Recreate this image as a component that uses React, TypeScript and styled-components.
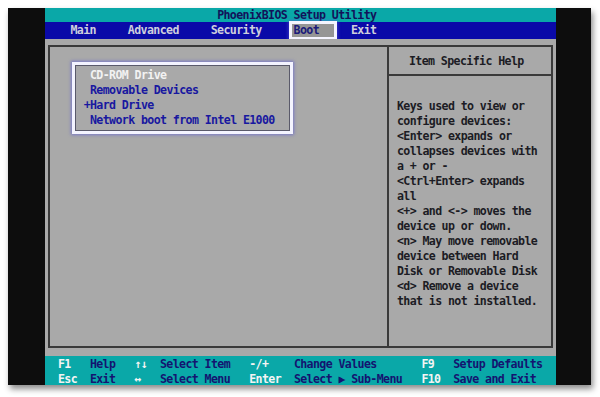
import styled, { createGlobalStyle } from 'styled-components';

// one text column of the 80x25 BIOS screen
const COL = 6.375;

const GlobalStyle = createGlobalStyle`
  html, body {
    margin: 0;
    padding: 0;
    background: #ffffff;
  }
  * {
    box-sizing: border-box;
  }
`;

const menuItems = ['Main', 'Advanced', 'Security', 'Boot', 'Exit'];

const bootOrder = [
    { label: 'CD-ROM Drive', selected: true },
    { label: 'Removable Devices' },
    { label: 'Hard Drive', expandable: true },
    { label: 'Network boot from Intel E1000' },
];

const helpLines = [
    'Keys used to view or',
    'configure devices:',
    '<Enter> expands or',
    'collapses devices with',
    'a + or -',
    '<Ctrl+Enter> expands',
    'all',
    '<+> and <-> moves the',
    'device up or down.',
    '<n> May move removable',
    'device between Hard',
    'Disk or Removable Disk',
    '<d> Remove a device',
    'that is not installed.',
];

const footerRows = [
    ['F1', 'Help', '↑↓', 'Select Item', '-/+', 'Change Values', 'F9', 'Setup Defaults'],
    ['Esc', 'Exit', '↔', 'Select Menu', 'Enter', 'Select ▶ Sub-Menu', 'F10', 'Save and Exit'],
];

// Styled Components
const Page = styled.div`
  width: 600px;
  height: 397px;
  padding: 8px 0 0 8px;
  font-family: 'DejaVu Sans Mono', 'Liberation Mono', monospace;
  font-weight: bold;
  font-size: 11.6px;
  letter-spacing: -0.61px;
`;

const Monitor = styled.div`
  width: 583px;
  height: 377px;
  padding: 0 35px 0 37px;
  background-color: #0d0d0d;
  box-shadow: 2px 4px 6px rgba(0, 0, 0, 0.45);
  display: flex;
`;

const Screen = styled.div`
  width: 511px;
  display: flex;
  flex-direction: column;
`;

const TitleBar = styled.div`
  height: 14px;
  line-height: 15px;
  padding-left: ${27 * COL}px;
  background-color: #0aa8a8;
  color: #12125a;
  white-space: pre;
`;

const MenuBar = styled.div`
  height: 17px;
  padding-left: ${4 * COL - 2}px;
  background-color: #0a0aa8;
  display: flex;
  align-items: center;
  gap: ${5 * COL - 4}px;
`;

const MenuItem = styled.div<{ $active?: boolean }>`
  height: 13px;
  line-height: 13px;
  padding: 0 2px;
  color: #cfcfdc;

  ${({ $active }) =>
        $active &&
        `
    padding-right: 15px;
    margin-right: -13px;
    background-color: #959595;
    color: #1a1a7a;
    box-shadow: 0 0 0 3px #f4f4ff, 0 0 3px 4px rgba(90, 90, 220, 0.55);
  `}
`;

const Main = styled.div`
  flex: 1;
  padding: 6px 3px 8px 3px;
  background-color: #a9a9a9;
  display: flex;
`;

const Frame = styled.div`
  flex: 1;
  border: 2px solid #3a3a3a;
  display: grid;
  grid-template-columns: 337px 1fr;
`;

const LeftPanel = styled.div`
  padding: 15px 0 0 22px;
`;

const BootList = styled.div`
  width: 221px;
  padding: 3px 0 3px 15px;
  border: 3px solid #f4f4ff;
  box-shadow: inset 0 0 0 1px #5a5a6a, 0 0 3px 1px rgba(90, 90, 220, 0.6);
`;

const BootItem = styled.div<{ $selected?: boolean; $expandable?: boolean }>`
  line-height: 15px;
  white-space: pre;
  color: ${({ $selected }) => ($selected ? '#f2f2f2' : '#1818a0')};
  margin-left: ${({ $expandable }) => ($expandable ? -COL : 0)}px;
`;

const RightPanel = styled.div`
  border-left: 2px solid #3a3a3a;
  display: flex;
  flex-direction: column;
`;

const HelpHeader = styled.div`
  height: 29px;
  line-height: 28px;
  padding-left: 20px;
  border-bottom: 2px solid #3a3a3a;
  color: #1c1c24;
  white-space: pre;
`;

const HelpText = styled.div`
  padding: 23px 0 0 8px;
  color: #1c1c24;
`;

const HelpLine = styled.div`
  line-height: 15px;
  white-space: pre;
`;

const Footer = styled.div`
  height: 29px;
  padding: 1px 0 0 13px;
  background-color: #0aa8a8;
  display: grid;
  grid-template-columns: ${[5, 7, 4, 14, 7, 20, 5].map((n) => `${n * COL}px`).join(' ')} 1fr;
  grid-auto-rows: 14.5px;
  line-height: 15px;
`;

const FooterCell = styled.div<{ $key?: boolean }>`
  white-space: pre;
  color: ${({ $key }) => ($key ? '#f4f4f4' : '#141470')};
`;

function App() {
    return (
        <>
            <GlobalStyle />
            <Page>
                <Monitor>
                    <Screen>
                        <TitleBar>PhoenixBIOS Setup Utility</TitleBar>
                        <MenuBar>
                            {menuItems.map((item) => (
                                <MenuItem key={item} $active={item === 'Boot'}>
                                    {item}
                                </MenuItem>
                            ))}
                        </MenuBar>
                        <Main>
                            <Frame>
                                <LeftPanel>
                                    <BootList>
                                        {bootOrder.map((dev) => (
                                            <BootItem key={dev.label} $selected={dev.selected} $expandable={dev.expandable}>
                                                {dev.expandable ? '+' : ''}
                                                {dev.label}
                                            </BootItem>
                                        ))}
                                    </BootList>
                                </LeftPanel>
                                <RightPanel>
                                    <HelpHeader>Item Specific Help</HelpHeader>
                                    <HelpText>
                                        {helpLines.map((line, index) => (
                                            <HelpLine key={index}>{line}</HelpLine>
                                        ))}
                                    </HelpText>
                                </RightPanel>
                            </Frame>
                        </Main>
                        <Footer>
                            {footerRows.map((row) =>
                                row.map((cell, index) => (
                                    <FooterCell key={cell} $key={index % 2 === 0}>
                                        {cell}
                                    </FooterCell>
                                ))
                            )}
                        </Footer>
                    </Screen>
                </Monitor>
            </Page>
        </>
    );
}

export default App;
